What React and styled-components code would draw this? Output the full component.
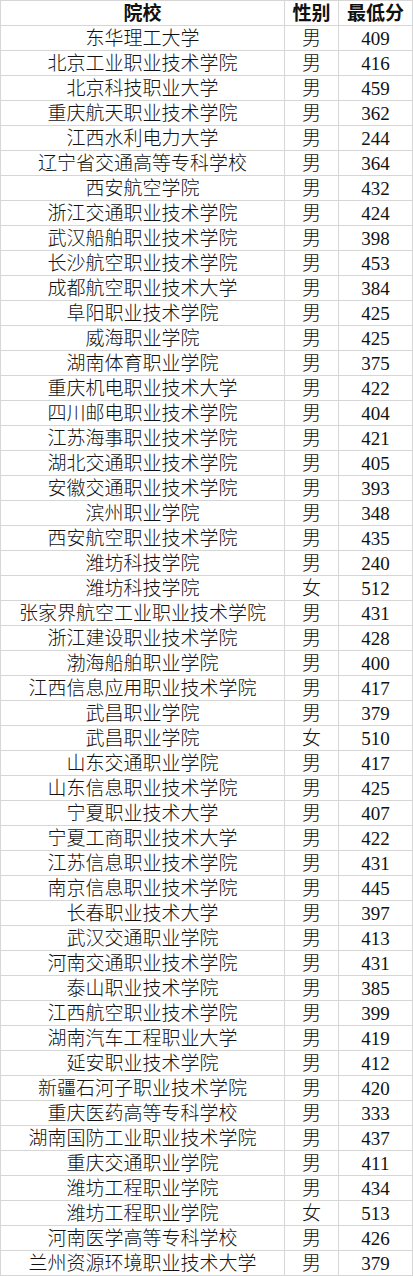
import React from "react";
import styled, { createGlobalStyle } from "styled-components";

const Global = createGlobalStyle`
  html, body { margin: 0; padding: 0; background: #ffffff; }
  #root { width: 413px; }
`;

const rows = [
  ["东华理工大学", "男", "409"],
  ["北京工业职业技术学院", "男", "416"],
  ["北京科技职业大学", "男", "459"],
  ["重庆航天职业技术学院", "男", "362"],
  ["江西水利电力大学", "男", "244"],
  ["辽宁省交通高等专科学校", "男", "364"],
  ["西安航空学院", "男", "432"],
  ["浙江交通职业技术学院", "男", "424"],
  ["武汉船舶职业技术学院", "男", "398"],
  ["长沙航空职业技术学院", "男", "453"],
  ["成都航空职业技术大学", "男", "384"],
  ["阜阳职业技术学院", "男", "425"],
  ["威海职业学院", "男", "425"],
  ["湖南体育职业学院", "男", "375"],
  ["重庆机电职业技术大学", "男", "422"],
  ["四川邮电职业技术学院", "男", "404"],
  ["江苏海事职业技术学院", "男", "421"],
  ["湖北交通职业技术学院", "男", "405"],
  ["安徽交通职业技术学院", "男", "393"],
  ["滨州职业学院", "男", "348"],
  ["西安航空职业技术学院", "男", "435"],
  ["潍坊科技学院", "男", "240"],
  ["潍坊科技学院", "女", "512"],
  ["张家界航空工业职业技术学院", "男", "431"],
  ["浙江建设职业技术学院", "男", "428"],
  ["渤海船舶职业学院", "男", "400"],
  ["江西信息应用职业技术学院", "男", "417"],
  ["武昌职业学院", "男", "379"],
  ["武昌职业学院", "女", "510"],
  ["山东交通职业学院", "男", "417"],
  ["山东信息职业技术学院", "男", "425"],
  ["宁夏职业技术大学", "男", "407"],
  ["宁夏工商职业技术大学", "男", "422"],
  ["江苏信息职业技术学院", "男", "431"],
  ["南京信息职业技术学院", "男", "445"],
  ["长春职业技术大学", "男", "397"],
  ["武汉交通职业学院", "男", "413"],
  ["河南交通职业技术学院", "男", "431"],
  ["泰山职业技术学院", "男", "385"],
  ["江西航空职业技术学院", "男", "399"],
  ["湖南汽车工程职业大学", "男", "419"],
  ["延安职业技术学院", "男", "412"],
  ["新疆石河子职业技术学院", "男", "420"],
  ["重庆医药高等专科学校", "男", "333"],
  ["湖南国防工业职业技术学院", "男", "437"],
  ["重庆交通职业学院", "男", "411"],
  ["潍坊工程职业学院", "男", "434"],
  ["潍坊工程职业学院", "女", "513"],
  ["河南医学高等专科学校", "男", "426"],
  ["兰州资源环境职业技术大学", "男", "379"],
];

const Sheet = styled.div`
  display: grid;
  grid-template-columns: 284px 54px 74px;
  grid-auto-rows: 25px;
  width: 413px;
  box-sizing: border-box;
  border-left: 1px solid #d6d6d6;
  border-top: 1px solid #d6d6d6;
  font-family: "Liberation Serif", "Noto Sans CJK SC", serif;
  color: #111111;
`;

const Cell = styled.div`
  box-sizing: border-box;
  border-right: 1px solid #d6d6d6;
  border-bottom: 1px solid #d6d6d6;
  display: flex;
  align-items: center;
  justify-content: center;
  font-size: 19px;
  line-height: 1;
  white-space: nowrap;
  font-weight: ${(p) => (p.$head ? 700 : 300)};
  padding-top: 1px;
`;

export default function App() {
  return (
    <>
      <Global />
      <Sheet>
        <Cell $head>院校</Cell>
        <Cell $head>性别</Cell>
        <Cell $head>最低分</Cell>
        {rows.map((r, i) => (
          <React.Fragment key={i}>
            <Cell>{r[0]}</Cell>
            <Cell>{r[1]}</Cell>
            <Cell>{r[2]}</Cell>
          </React.Fragment>
        ))}
      </Sheet>
    </>
  );
}
